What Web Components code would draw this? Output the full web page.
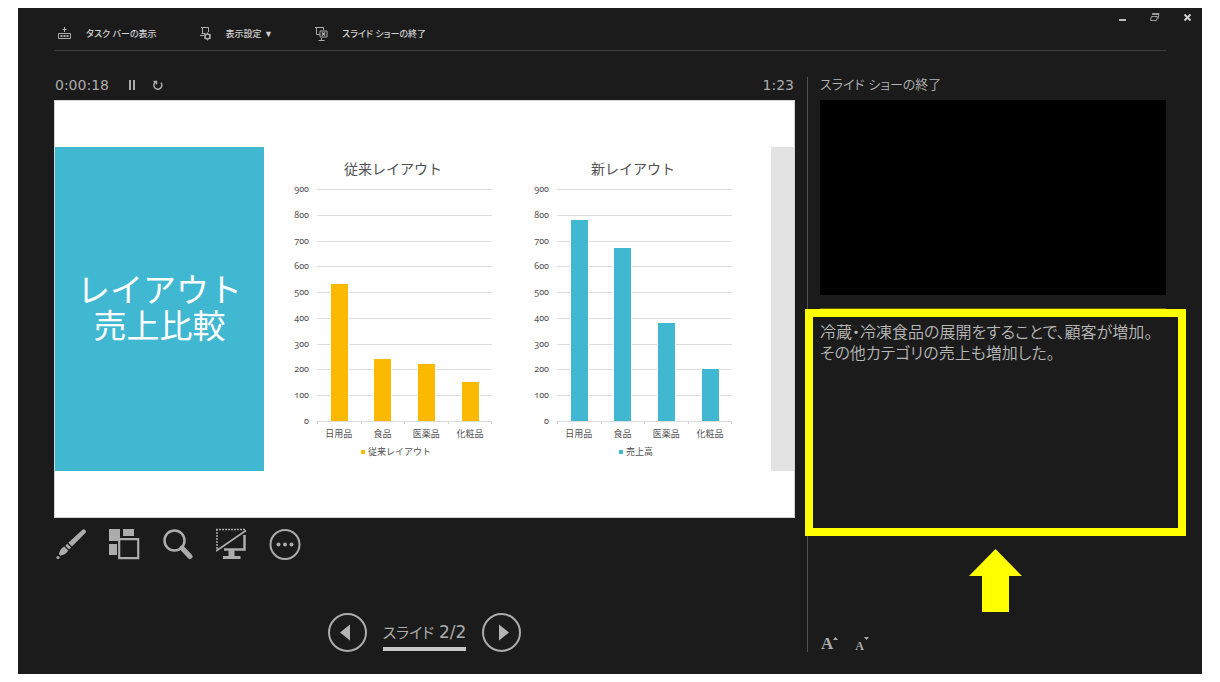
<!DOCTYPE html>
<html lang="ja">
<head>
<meta charset="utf-8">
<meta name="viewport" content="width=device-width, initial-scale=1">
<title>発表者ツール</title>
<style>
  body {
    margin: 0;
    background: #fff;
    --panel: #1b1b1b;
    --ink: #acacac;
    --line: #3d3d3d;
    --teal: #40b8d2;
    --amber: #fbb900;
    --mark: #ffff00;
    --ui: "DejaVu Sans", "Noto Sans CJK JP", sans-serif;
    --jp: "Liberation Sans", "Noto Sans CJK JP", sans-serif;
  }
</style>
</head>
<body>
<presenter-window>
  <window-controls slot="controls"></window-controls>
  <presenter-toolbar slot="toolbar">
    <tool-button icon="taskbar">タスク バーの表示</tool-button>
    <tool-button icon="display">表示設定 ▼</tool-button>
    <tool-button icon="end">スライド ショーの終了</tool-button>
  </presenter-toolbar>

  <slide-timer slot="stage" elapsed="0:00:18" clock="1:23"></slide-timer>
  <slide-view slot="stage">
    <span slot="title">レイアウト<br>売上比較</span>
    <bar-chart heading="従来レイアウト" series="従来レイアウト" values="530,240,220,150" color="var(--amber)"></bar-chart>
    <bar-chart heading="新レイアウト" series="売上高" values="780,670,380,200" color="var(--teal)"></bar-chart>
  </slide-view>
  <slide-tools slot="stage"></slide-tools>
  <slide-nav slot="stage">スライド <b>2/2</b></slide-nav>

  <next-preview slot="side">スライド ショーの終了</next-preview>
  <speaker-notes slot="side">冷蔵・冷凍食品の展開をすることで、顧客が増加。<br>その他カテゴリの売上も増加した。</speaker-notes>
  <font-size-buttons slot="side"></font-size-buttons>
</presenter-window>

<script>
const BUTTON = `
  button { margin: 0; padding: 0; border: 0; background: none; color: inherit; font: inherit; font-feature-settings: inherit; cursor: pointer; }
  svg { display: block; }
`;

function define(name, render) {
  customElements.define(name, class extends HTMLElement {
    constructor() {
      super();
      this.attachShadow({ mode: 'open' });
    }
    connectedCallback() {
      this.shadowRoot.innerHTML = render(this);
    }
  });
}

define('presenter-window', () => `
  <style>
    :host { display: flex; box-sizing: border-box; min-height: 100vh; padding: 8px 18px; color: var(--ink); font-family: var(--ui); }
    .window { flex: 1; display: flex; flex-direction: column; background: var(--panel); padding-bottom: 22px; }
    main { flex: 1; display: grid; grid-template-columns: minmax(0, 741fr) minmax(0, 359fr); column-gap: 12px; margin: 26px 36px 0; }
    section, aside { display: flex; flex-direction: column; min-width: 0; }
    aside { border-left: 1px solid #505050; padding-left: 12px; }
  </style>
  <div class="window">
    <slot name="controls"></slot>
    <slot name="toolbar"></slot>
    <main>
      <section><slot name="stage"></slot></section>
      <aside><slot name="side"></slot></aside>
    </main>
  </div>`);

define('window-controls', () => `
  <style>
    ${BUTTON}
    :host { display: flex; justify-content: flex-end; align-items: center; gap: 20px; height: 18px; padding-right: 9px; }
  </style>
  <button aria-label="最小化"><svg width="12" height="12"><path d="M2 9h7" stroke="#bbb" stroke-width="2"/></svg></button>
  <button aria-label="元に戻す"><svg width="12" height="12" fill="none" stroke="#999"><path d="M3.500 4V2.500h6.500L9 8M3 5.500h5.500l-1 4h-6l1-4zM4 3.500h6"/></svg></button>
  <button aria-label="閉じる"><svg width="12" height="12"><path d="M3.500 3.500l6 6M9.500 3.500l-6 6" stroke="#ccc" stroke-width="2"/></svg></button>`);

define('presenter-toolbar', () => `
  <style>
    :host { display: flex; align-items: center; gap: 40px; height: 16px; margin: 0 36px; padding: 0 3px 8px; border-bottom: 1px solid var(--line); }
  </style>
  <slot></slot>`);

const TOOLBAR_ICONS = {
  taskbar: '<path d="M1.500 7.500h12v5h-12zM7.500 1v5M5.500 3.500h4"/><path d="M3.500 10h2M6.500 10h2M9.500 10h2" stroke-width="2"/>',
  display: '<path d="M5.500 7.500V1.500h6v4.500M4 1.500h1.500M4.500 7.500h4M3 9.500h4"/><circle cx="10.500" cy="10.500" r="2.500" stroke-width="1.500"/><path d="M10.500 6.500v1.500M10.500 13v1.500M7 8.500l1.300.8M12.700 11.700l1.300.8M7 12.500l1.300-.8M12.700 9.300l1.300-.8"/>',
  end: '<path d="M2 1.500h9M3.500 2v6.500H7M10.500 2v2M8.500 12v2.500M5.500 14.500h6M7 5h7v6H7z"/><path d="M9 6.500l3 3M12 6.500l-3 3" stroke-width="1.500"/>'
};

define('tool-button', el => `
  <style>
    ${BUTTON}
    :host { display: block; }
    button { display: flex; align-items: center; gap: 13px; font-family: var(--jp); font-size: 9px; font-weight: 500; line-height: 16px; font-feature-settings: "palt"; color: #d0d0d0; white-space: nowrap; }
  </style>
  <button><svg width="16" height="16" fill="none" stroke="#acacac" aria-hidden="true">${TOOLBAR_ICONS[el.getAttribute('icon')]}</svg><span><slot></slot></span></button>`);

define('slide-timer', el => `
  <style>
    ${BUTTON}
    :host { display: flex; align-items: center; height: 16px; padding: 0 1px 7px; font-size: 14px; line-height: 16px; }
    .elapsed { margin-right: 16px; }
    .clock { margin-left: auto; }
    button + button { margin-left: 12px; }
  </style>
  <span class="elapsed">${el.getAttribute('elapsed')}</span>
  <button aria-label="一時停止"><svg width="14" height="14"><path d="M5 2v10M9 2v10" stroke="#acacac" stroke-width="2"/></svg></button>
  <button aria-label="再開"><svg width="14" height="14" fill="none" stroke="#acacac" stroke-width="1.500"><path d="M10 4.800A4 4 0 1 1 4.500 4M2.500 3.500h3v3"/></svg></button>
  <span class="clock">${el.getAttribute('clock')}</span>`);

define('slide-view', () => `
  <style>
    :host { display: grid; grid-template-columns: 209px minmax(0, 1fr) 23px; padding: 46px 0; border: 1px solid #d4d4d4; background: #fff; }
    h1 { margin: 0; display: flex; align-items: center; justify-content: center; background: var(--teal); color: #fff; font-family: var(--jp); font-size: 33px; font-weight: 400; line-height: 36px; text-align: center; }
    .charts { display: grid; grid-template-columns: repeat(2, minmax(0, 1fr)); gap: 40px; padding: 12px 37px 13px 30px; }
    .next { background: #e3e3e3; }
  </style>
  <h1><slot name="title"></slot></h1>
  <div class="charts"><slot></slot></div>
  <div class="next"></div>`);

define('bar-chart', el => {
  const color = el.getAttribute('color');
  const values = el.getAttribute('values').split(',').map(Number);
  const ticks = [900, 800, 700, 600, 500, 400, 300, 200, 100, 0];
  const y = v => Math.round((900 - v) * 232 / 900);
  const lines = ticks.map(t => `<rect x="0" y="${y(t)}" width="175" height="1" fill="#dcdcdc"/>`).join('');
  const marks = [0, 44, 87, 131, 174].map(x => `<rect x="${x}" y="232" width="1" height="3" fill="#d4d4d4"/>`).join('');
  const bars = values.map((v, i) => {
    const x = Math.round(22 + i * 43.67 - 8.5);
    return `<rect x="${x - 1}" y="${y(v) - 1}" width="19" height="${233 - y(v)}" fill="#fff"/><rect x="${x}" y="${y(v)}" width="17" height="${232 - y(v)}" style="fill:${color}"/>`;
  }).join('');
  return `
  <style>
    :host { display: block; color: #505050; font-family: var(--jp); font-size: 9px; line-height: 12px; }
    figure { margin: 0; display: grid; grid-template-columns: 15px minmax(0, 1fr); column-gap: 8px; padding-right: 2px; }
    h2 { grid-column: 1 / -1; margin: 0 0 10px; font-size: 14px; line-height: 20px; font-weight: 400; text-align: center; }
    .ticks { display: flex; flex-direction: column; justify-content: space-between; align-items: flex-end; margin: -6px 0 -5px; font-family: "Noto Sans", sans-serif; font-variant-numeric: oldstyle-nums; }
    svg { display: block; width: 100%; height: 233px; overflow: visible; }
    .names { grid-column: 2; display: grid; grid-template-columns: repeat(4, 1fr); margin-top: 6px; text-align: center; white-space: nowrap; }
    .key { grid-column: 1 / -1; display: flex; justify-content: center; align-items: center; gap: 3px; margin-top: 6px; padding-left: 6px; }
    .key i { width: 4px; height: 4px; background: ${color}; }
  </style>
  <figure>
    <h2>${el.getAttribute('heading')}</h2>
    <div class="ticks">${ticks.map(t => `<span>${t}</span>`).join('')}</div>
    <svg viewBox="0 0 175 233" preserveAspectRatio="none" aria-hidden="true">${lines}${marks}${bars}</svg>
    <div class="names"><span>日用品</span><span>食品</span><span>医薬品</span><span>化粧品</span></div>
    <figcaption class="key"><i></i>${el.getAttribute('series')}</figcaption>
  </figure>`;
});

define('slide-tools', () => `
  <style>
    ${BUTTON}
    :host { display: flex; justify-content: space-between; width: 246px; padding: 10px 0 0 1px; }
  </style>
  <button aria-label="ペン"><svg width="32" height="32" fill="#acacac"><path d="M28 1.200a2.600 2.600 0 0 1 2.800 3.400L17 18.500l-3.700-3.700zM12.300 15.800l3.700 3.700-2 2-3.700-3.700zM9.300 18.600l3.900 3.900c-1.500 2.800-4.600 4.800-7.800 5.200l-1.500-1.600c.600-3.200 2.600-6 5.400-7.500z"/><circle cx="3" cy="29.500" r="1.600"/></svg></button>
  <button aria-label="すべてのスライドを表示"><svg width="32" height="32" fill="#acacac"><path d="M0 1h11v12H0zM14 1h11v7H14zM0 16h8v11H0z"/><path d="M10.200 11.200h19v19h-19z" fill="#1b1b1b" stroke="#acacac" stroke-width="2.200"/></svg></button>
  <button aria-label="拡大"><svg width="32" height="32" fill="none" stroke="#acacac"><circle cx="12.500" cy="12.500" r="10" stroke-width="2.500"/><path d="M20 20l8 8.500" stroke-width="5" stroke-linecap="round"/></svg></button>
  <button aria-label="スライドショーをカットアウト"><svg width="32" height="32" fill="none" stroke="#acacac"><path d="M1 21V2M0 1.500h29" stroke-width="1.500" stroke-dasharray="2 1"/><path d="M0 23L30 2.500" stroke-width="1.800"/><path d="M28.500 7v14.500H8" stroke-width="2.500"/><path d="M12.500 22h6v6h6v3H7v-3h5.500z" fill="#acacac" stroke="none"/></svg></button>
  <button aria-label="その他"><svg width="32" height="32" fill="#acacac"><circle cx="16" cy="16.500" r="14.500" fill="none" stroke="#acacac" stroke-width="2"/><circle cx="9.500" cy="16.500" r="2"/><circle cx="16" cy="16.500" r="2"/><circle cx="22.500" cy="16.500" r="2"/></svg></button>`);

define('slide-nav', () => `
  <style>
    ${BUTTON}
    :host { display: flex; justify-content: center; align-items: center; gap: 16px; margin-top: auto; }
    .count { margin-top: 8px; border-bottom: 4px solid #c8c8c8; padding-bottom: 4px; font-family: var(--ui); font-size: 15px; line-height: 20px; font-feature-settings: "palt"; white-space: nowrap; }
    ::slotted(b) { font-size: 17px; font-weight: 400; }
  </style>
  <button aria-label="前のスライド"><svg width="39" height="39"><circle cx="19.500" cy="19.500" r="18.500" fill="none" stroke="#acacac" stroke-width="2"/><path d="M12 19.500l10-8v16z" fill="#b4b4b4"/></svg></button>
  <button class="count"><slot></slot></button>
  <button aria-label="次のスライド"><svg width="39" height="39"><circle cx="19.500" cy="19.500" r="18.500" fill="none" stroke="#acacac" stroke-width="2"/><path d="M27 19.500l-10-8v16z" fill="#b4b4b4"/></svg></button>`);

define('next-preview', () => `
  <style>
    :host { display: block; }
    h2 { margin: 0 0 7px; font-family: var(--jp); font-size: 13px; line-height: 16px; font-weight: 350; font-feature-settings: "palt"; color: #b4b4b4; }
    .screen { aspect-ratio: 346 / 195; background: #000; }
  </style>
  <h2><slot></slot></h2>
  <div class="screen"></div>`);

define('speaker-notes', () => `
  <style>
    :host { flex: 1; display: block; position: relative; margin-top: 13px; border-top: 1px solid #5c5c00; }
    p { margin: 0; padding-top: 13px; font-family: var(--jp); font-size: 16px; line-height: 21px; font-weight: 350; font-feature-settings: "palt"; color: #b8b8b8; }
    .mark { position: absolute; top: 0; left: -15px; right: -20px; height: 227px; box-sizing: border-box; border: 8px solid var(--mark); pointer-events: none; }
    svg { position: absolute; top: 100%; left: 50%; margin: 21px 0 0 -27px; }
  </style>
  <p><slot></slot></p>
  <div class="mark"><svg width="53" height="63" aria-hidden="true"><path d="M26.500 0L53 27H40v36H13V27H0z" fill="#ff0"/></svg></div>`);

define('font-size-buttons', () => `
  <style>
    ${BUTTON}
    :host { display: flex; align-items: flex-end; gap: 17px; height: 14px; font-family: "Liberation Serif", serif; font-weight: 700; padding-left: 1px; }
    button { display: flex; align-items: flex-start; height: 16px; line-height: 16px; }
    .large { font-size: 17px; }
    .small { font-size: 12px; }
    .small span { padding-top: 2px; }
  </style>
  <button class="large" aria-label="テキストを拡大"><span>A</span><svg width="5" height="5"><path d="M0 4l2.500-3L5 4z" fill="#acacac"/></svg></button>
  <button class="small" aria-label="テキストを縮小"><span>A</span><svg width="5" height="5"><path d="M0 1l2.500 3L5 1z" fill="#acacac"/></svg></button>`);
</script>
</body>
</html>
